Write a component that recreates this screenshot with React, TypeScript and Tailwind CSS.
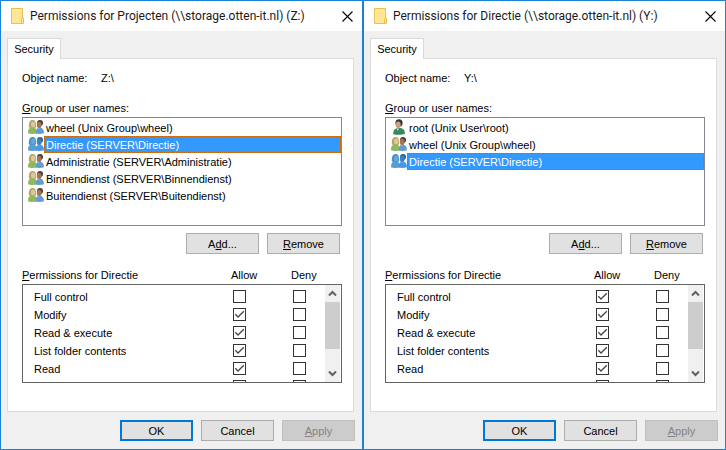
import { useId, useState } from "react";
import clsx from "clsx";

type Principal = {
  name: string;
  kind: "user" | "group";
};

type DialogProps = {
  title: string;
  path: string;
  principals: Principal[];
  initial: string;
  fullControl: boolean;
};

const PERMISSIONS = [
  "Full control",
  "Modify",
  "Read & execute",
  "List folder contents",
  "Read",
  "Write",
];

function FolderIcon() {
  return (
    <svg width="14" height="16" viewBox="0 0 14 16" aria-hidden="true">
      <path d="M0.5 0.5H11.5V9L12.5 10V15.5H0.5Z" fill="#ffe594" stroke="#e8c251" />
      <path d="M10.5 15V10.5L11.5 9.5" fill="none" stroke="#e8c251" />
    </svg>
  );
}

function GroupIcon({ selected }: { selected: boolean }) {
  const c = selected
    ? { hair: "#4a92c6", face: "#64a8d8", body: "#559fd2", hair2: "#22649c", face2: "#3f83c0", body2: "#4b97e6", shirt: "#6fb0f0" }
    : { hair: "#b8a468", face: "#dcc898", body: "#8fb95a", hair2: "#4a3d38", face2: "#a87350", body2: "#669bcf", shirt: "#8fbbe2" };
  return (
    <svg width="16" height="16" viewBox="0 0 16 16" aria-hidden="true">
      <path d="M0.8 8C0.6 3.5 1.8 1 4.6 1S8.4 3.2 8.2 8L6.5 9.5H2.5Z" fill={c.hair} />
      <ellipse cx="5.2" cy="5.6" rx="2.2" ry="3" fill={c.face} />
      <path d="M0 14.2C0 10.2 1.2 8.6 4.5 8.6S8.6 10.2 8.8 14.6C6 15.2 2 15.2 0 14.2Z" fill={c.body} />
      <ellipse cx="12" cy="4" rx="3" ry="3" fill={c.hair2} />
      <ellipse cx="11.2" cy="5.9" rx="2.3" ry="3.2" fill={c.face2} />
      <path d="M7.6 14.6C7.4 10.6 8.8 8.8 11.6 8.8S16 10.6 16 14.2C13.5 15.2 10 15.2 7.6 14.6Z" fill={c.body2} />
      <path d="M9.8 9L10.6 10.6L11.8 8.9Z" fill={c.shirt} />
    </svg>
  );
}

function UserIcon() {
  return (
    <svg width="16" height="16" viewBox="0 0 16 16" aria-hidden="true">
      <ellipse cx="8" cy="4" rx="3.6" ry="3.8" fill="#3a3532" />
      <ellipse cx="7.2" cy="5.8" rx="2.5" ry="3.4" fill="#c9a184" />
      <path d="M2.2 15.2C2.2 10.6 4.3 9 8 9S13.8 10.6 14 14.8C11 16 5.5 16 2.2 15.2Z" fill="#36895f" />
      <path d="M5.4 9.6L6.6 11.8L8.2 9.4Z" fill="#cfe6d8" />
    </svg>
  );
}

function CheckBox({ labelledBy, defaultChecked }: { labelledBy: string; defaultChecked?: boolean }) {
  return (
    <span className="relative block size-[13px]">
      <input
        type="checkbox"
        aria-labelledby={labelledBy}
        defaultChecked={defaultChecked}
        className="peer block size-full appearance-none border border-[#333333] bg-white"
      />
      <svg
        className="pointer-events-none absolute inset-0 hidden peer-checked:block"
        width="13"
        height="13"
        viewBox="0 0 13 13"
        aria-hidden="true"
      >
        <path d="M2.3 6.3L5 9L10.8 3.2" fill="none" stroke="#444444" strokeWidth="1.3" />
      </svg>
    </span>
  );
}

function PushButton({
  children,
  primary,
  disabled,
}: {
  children: React.ReactNode;
  primary?: boolean;
  disabled?: boolean;
}) {
  return (
    <button
      type="button"
      disabled={disabled}
      className={clsx(
        "flex h-[21px] w-[73px] items-center justify-center",
        primary && "border-2 border-[#0078d7] bg-[#e1e1e1]",
        disabled && "border border-[#bfbfbf] bg-[#cccccc] text-[#838383]",
        !primary && !disabled && "border border-[#adadad] bg-[#e1e1e1]",
      )}
    >
      <span>{children}</span>
    </button>
  );
}

function ScrollArrow({ down }: { down?: boolean }) {
  return (
    <button
      type="button"
      aria-label={down ? "Scroll down" : "Scroll up"}
      className="flex h-[17px] items-center justify-center bg-[#f0f0f0]"
    >
      <svg width="9" height="7" viewBox="0 0 9 7" aria-hidden="true">
        <path
          d={down ? "M1 1.5L4.5 5L8 1.5" : "M1 5.5L4.5 2L8 5.5"}
          fill="none"
          stroke="#606060"
          strokeWidth="2"
        />
      </svg>
    </button>
  );
}

function PermissionsDialog({ title, path, principals, initial, fullControl }: DialogProps) {
  const id = useId();
  const [selected, setSelected] = useState(initial);

  return (
    <section
      aria-label={title}
      className="flex min-w-0 flex-1 flex-col border border-[#1883d7] bg-[#f0f0f0]"
    >
      <header className="flex h-[30px] items-center bg-white pr-[9px] pl-2.5">
        <FolderIcon />
        <h1 className="ml-[5px] flex-1 truncate font-[Roboto,sans-serif] text-xs text-[#1a1a1a]">
          {title}
        </h1>
        <button type="button" aria-label="Close">
          <svg width="11" height="11" viewBox="0 0 11 11" aria-hidden="true">
            <path d="M0.5 0.5L10.5 10.5M10.5 0.5L0.5 10.5" stroke="#000000" strokeWidth="1.1" />
          </svg>
        </button>
      </header>

      <div className="pt-[7px] pr-2 pl-1.5">
        <div role="tablist" className="flex">
          <button
            type="button"
            role="tab"
            aria-selected="true"
            className="relative z-10 -mb-px h-[21px] w-[54px] border border-b-0 border-[#d9d9d9] bg-white"
          >
            Security
          </button>
        </div>

        <div role="tabpanel" className="border border-[#dcdcdc] bg-white pt-[11px] pr-[11px] pb-7 pl-3.5">
          <div className="flex">
            <span className="w-[79px]">Object name:</span>
            <span>{path}</span>
          </div>

          <div id={`${id}-names`} className="mt-3.5">
            <u>G</u>roup or user names:
          </div>
          <ul
            role="listbox"
            aria-labelledby={`${id}-names`}
            className="mt-px h-[109px] border border-[#828790] bg-white pt-px"
          >
            {principals.map((p) => {
              const active = p.name === selected;
              return (
                <li
                  key={p.name}
                  role="option"
                  aria-selected={active}
                  onClick={() => setSelected(p.name)}
                  className="flex h-[17px] pl-[5px]"
                >
                  {p.kind === "user" ? <UserIcon /> : <GroupIcon selected={active} />}
                  <span
                    className={clsx(
                      "flex-1 border border-dotted pl-px leading-4",
                      active ? "border-[#cc6600] bg-[#3399ff] text-white" : "border-transparent",
                    )}
                  >
                    {p.name}
                  </span>
                </li>
              );
            })}
          </ul>

          <div className="mt-[7px] flex justify-end gap-2 pr-0.5">
            <PushButton>
              A<u>d</u>d...
            </PushButton>
            <PushButton>
              <u>R</u>emove
            </PushButton>
          </div>

          <div className="mt-[13px] flex pr-[17px]">
            <span className="flex-1">
              <u>P</u>ermissions for Directie
            </span>
            <span id={`${id}-allow`} className="w-[60px]">
              Allow
            </span>
            <span id={`${id}-deny`} className="w-[34px]">
              Deny
            </span>
          </div>

          <div className="mt-px flex h-[99px] border border-[#646464] bg-white">
            <div className="flex-1 overflow-y-auto pt-[3px] [scrollbar-width:none]">
              {PERMISSIONS.map((name, i) => (
                <div key={name} className="flex h-[18px] pt-0.5 pr-[19px] pl-[11px] leading-[14px]">
                  <span id={`${id}-p${i}`} className="flex-1">
                    {name}
                  </span>
                  <span className="w-[60px]">
                    <CheckBox labelledBy={`${id}-p${i} ${id}-allow`} defaultChecked={i > 0 || fullControl} />
                  </span>
                  <CheckBox labelledBy={`${id}-p${i} ${id}-deny`} />
                </div>
              ))}
            </div>
            <div className="mr-px flex w-[15px] flex-col bg-[#f0f0f0]">
              <ScrollArrow />
              <div className="h-[47px] bg-[#cdcdcd]" />
              <div className="flex-1" />
              <ScrollArrow down />
            </div>
          </div>
        </div>
      </div>

      <footer className="flex justify-end gap-2 pt-2 pr-[7px] pb-2">
        <PushButton primary>OK</PushButton>
        <PushButton>Cancel</PushButton>
        <PushButton disabled>
          <u>A</u>pply
        </PushButton>
      </footer>
    </section>
  );
}

export default function App() {
  return (
    <main className="flex font-['Liberation_Sans',sans-serif] text-[11px] leading-4 text-black">
      <PermissionsDialog
        title="Permissions for Projecten (\\storage.otten-it.nl) (Z:)"
        path="Z:\"
        initial="Directie (SERVER\Directie)"
        fullControl={false}
        principals={[
          { name: "wheel (Unix Group\\wheel)", kind: "group" },
          { name: "Directie (SERVER\\Directie)", kind: "group" },
          { name: "Administratie (SERVER\\Administratie)", kind: "group" },
          { name: "Binnendienst (SERVER\\Binnendienst)", kind: "group" },
          { name: "Buitendienst (SERVER\\Buitendienst)", kind: "group" },
        ]}
      />
      <PermissionsDialog
        title="Permissions for Directie (\\storage.otten-it.nl) (Y:)"
        path="Y:\"
        initial="Directie (SERVER\Directie)"
        fullControl
        principals={[
          { name: "root (Unix User\\root)", kind: "user" },
          { name: "wheel (Unix Group\\wheel)", kind: "group" },
          { name: "Directie (SERVER\\Directie)", kind: "group" },
        ]}
      />
    </main>
  );
}
